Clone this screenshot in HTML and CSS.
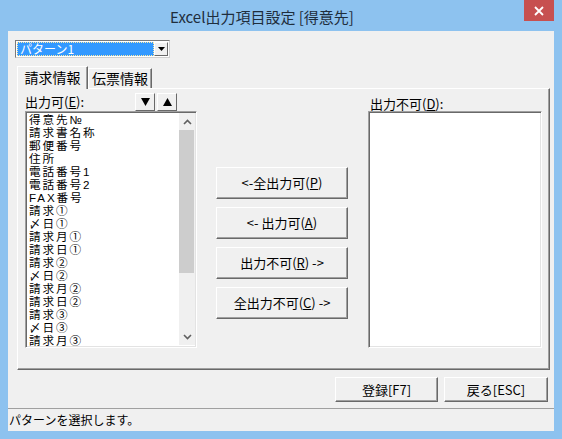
FILE: index.html
```html
<!DOCTYPE html>
<html lang="ja">
<head>
<meta charset="utf-8">
<title>Excel出力項目設定</title>
<link rel="stylesheet" href="styles.css">
</head>
<body>
<div class="window">
  <div class="titlebar">
    <div class="title">Excel出力項目設定 [得意先]</div>
    <div class="close">
      <svg width="10" height="10" viewBox="0 0 10 10"><path d="M1 1 L9 9 M9 1 L1 9" stroke="#fff" stroke-width="1.8" fill="none"/></svg>
    </div>
  </div>
  <div class="client">
    <div class="combo">
      <div class="combo-value"><span class="combo-focus">パターン1</span></div>
      <div class="combo-btn">
        <svg width="7" height="4" viewBox="0 0 7 4"><path d="M0 0 H7 L3.5 4 Z" fill="#000"/></svg>
      </div>
    </div>
    <div class="tabs">
      <div class="tab tab-active">請求情報</div>
      <div class="tab tab-inactive">伝票情報</div>
    </div>
    <div class="panel">
      <div class="col-left">
        <div class="list-head">
          <span class="label">出力可(<u>E</u>):</span>
          <div class="mini-btns">
            <div class="mini-btn"><svg width="9" height="8" viewBox="0 0 9 8"><path d="M0 0 H9 L4.5 8 Z" fill="#000"/></svg></div>
            <div class="mini-btn"><svg width="9" height="8" viewBox="0 0 9 8"><path d="M0 8 H9 L4.5 0 Z" fill="#000"/></svg></div>
          </div>
        </div>
        <div class="listbox">
          <ul class="items">
            <li>得意先№</li>
            <li>請求書名称</li>
            <li>郵便番号</li>
            <li>住所</li>
            <li>電話番号1</li>
            <li>電話番号2</li>
            <li>FAX番号</li>
            <li>請求①</li>
            <li>〆日①</li>
            <li>請求月①</li>
            <li>請求日①</li>
            <li>請求②</li>
            <li>〆日②</li>
            <li>請求月②</li>
            <li>請求日②</li>
            <li>請求③</li>
            <li>〆日③</li>
            <li>請求月③</li>
          </ul>
          <div class="vscroll">
            <div class="arrow"><svg width="9" height="6" viewBox="0 0 9 6"><path d="M1 5 L4.5 1.5 L8 5" stroke="#606060" stroke-width="1.6" fill="none"/></svg></div>
            <div class="track"><div class="thumb"></div></div>
            <div class="arrow"><svg width="9" height="6" viewBox="0 0 9 6"><path d="M1 1 L4.5 4.5 L8 1" stroke="#606060" stroke-width="1.6" fill="none"/></svg></div>
          </div>
        </div>
      </div>
      <div class="col-mid">
        <div class="btn move-btn">&lt;-全出力可(<u>P</u>)</div>
        <div class="btn move-btn">&lt;- 出力可(<u>A</u>)</div>
        <div class="btn move-btn">出力不可(<u>R</u>) -&gt;</div>
        <div class="btn move-btn">全出力不可(<u>C</u>) -&gt;</div>
      </div>
      <div class="col-right">
        <div class="list-head right-head">
          <span class="label">出力不可(<u>D</u>):</span>
        </div>
        <div class="listbox listbox-right"></div>
      </div>
    </div>
    <div class="footer">
      <div class="btn foot-btn foot-save">登録[F7]</div>
      <div class="btn foot-btn foot-back">戻る[ESC]</div>
    </div>
    <div class="status">パターンを選択します。</div>
  </div>
</div>
</body>
</html>
```
FILE: styles.css
```css
* { box-sizing: border-box; }
body { margin: 0; background: #8dc2ef; }
.window {
  width: 562px; height: 439px;
  background: #8dc2ef;
  padding: 0 8px 8px;
  display: flex; flex-direction: column;
  font-family: "Noto Sans CJK JP", "Noto Sans", sans-serif;
  color: #000;
}
.titlebar { height: 31px; display: flex; align-items: flex-start; }
.title {
  flex: 1; margin-left: -8px;
  text-align: center; font-size: 15px; line-height: 33px;
  color: #1f2e3d;
}
.close {
  width: 30px; height: 21px; background: #c75050;
  display: flex; align-items: center; justify-content: center;
}
.client {
  flex: 1; background: #f0f0f0;
  display: flex; flex-direction: column;
  font-size: 13px;
}
/* combo */
.combo {
  margin: 9px 0 0 7px; width: 155px; height: 18px;
  border: 1px solid #7a7a7a; border-right-color: #d0d0d0; border-bottom-color: #d0d0d0;
  background: #fff; display: flex; padding: 1px;
}
.combo-value { flex: 1; background: #3399ff; padding: 0; display: flex; }
.combo-focus {
  flex: 1; border: 1px dotted #ffe9a0; color: #fff;
  font-size: 12px; line-height: 12px; padding-left: 2px; white-space: nowrap;
}
.combo-btn {
  width: 14px; background: #f0f0f0;
  border: 1px solid #fff; border-right-color: #696969; border-bottom-color: #696969;
  display: flex; align-items: center; justify-content: center;
}
/* tabs */
.tabs { margin: 8px 0 0 9px; height: 22px; display: flex; align-items: flex-end; position: relative; z-index: 1; }
.tab {
  background: #f0f0f0; font-size: 14px; text-align: center;
  border-left: 1px solid #fff; border-top: 1px solid #fff; border-right: 1px solid #696969;
  box-shadow: inset -1px 0 0 #a0a0a0;
  white-space: nowrap;
}
.tab-active { width: 71px; height: 23px; line-height: 21px; margin-bottom: -1px; }
.tab-inactive { width: 64px; height: 20px; line-height: 19px; }
/* panel */
.panel {
  margin-left: 9px; width: 533px; height: 282px;
  border-top: 1px solid #fff; border-left: 1px solid #fff;
  border-right: 1px solid #696969; border-bottom: 1px solid #696969;
  box-shadow: inset -1px -1px 0 #a0a0a0;
  padding: 3px 0 0 7px;
  display: flex; align-items: flex-start;
}
.col-left { width: 172px; display: flex; flex-direction: column; }
.list-head { height: 19px; display: flex; align-items: center; }
.label { font-size: 13px; white-space: nowrap; }
.mini-btns { margin-left: auto; margin-right: 20px; display: flex; gap: 2px; }
.mini-btn {
  width: 20px; height: 18px; background: #f0f0f0;
  border: 1px solid #fff; border-right-color: #696969; border-bottom-color: #696969;
  display: flex; align-items: center; justify-content: center;
}
.listbox {
  height: 237px; background: #fff;
  border: 1px solid #a0a0a0; border-right-color: #fff; border-bottom-color: #fff;
  box-shadow: inset 1px 1px 0 #696969, inset -1px -1px 0 #e3e3e3;
  padding: 1px 2px 2px 2px;
  display: flex;
}
.items {
  flex: 1; list-style: none; margin: 0; padding: 0 0 0 1px;
  font-family: "Liberation Sans", "Noto Sans CJK JP", sans-serif;
  font-size: 11.6px; letter-spacing: 1.9px; line-height: 13px; white-space: nowrap;
}
.items li { height: 13px; }
.vscroll { width: 16px; display: flex; flex-direction: column; background: #f0f0f0; margin-right: -1px; }
.arrow { height: 17px; display: flex; align-items: center; justify-content: center; }
.track { flex: 1; }
.thumb { height: 143px; background: #cdcdcd; margin: 0 1px 0 0; }
.col-mid {
  margin: 75px 0 0 19px; width: 132px;
  display: flex; flex-direction: column; gap: 8px;
}
.btn {
  background: #f0f0f0; text-align: center; white-space: nowrap;
  border: 1px solid #fff; border-right-color: #696969; border-bottom-color: #696969;
  box-shadow: inset -1px -1px 0 #a0a0a0;
  font-size: 13px;
}
.move-btn { height: 32px; line-height: 30px; }
.col-right { margin-left: 20px; width: 174px; display: flex; flex-direction: column; }
.right-head { padding: 4px 0 0 2px; }
.listbox-right { width: 174px; }
.footer { margin-top: 7px; height: 25px; display: flex; justify-content: flex-end; gap: 6px; padding-right: 6px; }
.foot-btn { height: 25px; line-height: 23px; }
.foot-save { width: 103px; }
.foot-back { width: 104px; }
.status {
  margin-top: 6px; height: 23px;
  border-top: 1px solid #a0a0a0;
  font-size: 12px; line-height: 21px; padding-left: 1px;
}
```
